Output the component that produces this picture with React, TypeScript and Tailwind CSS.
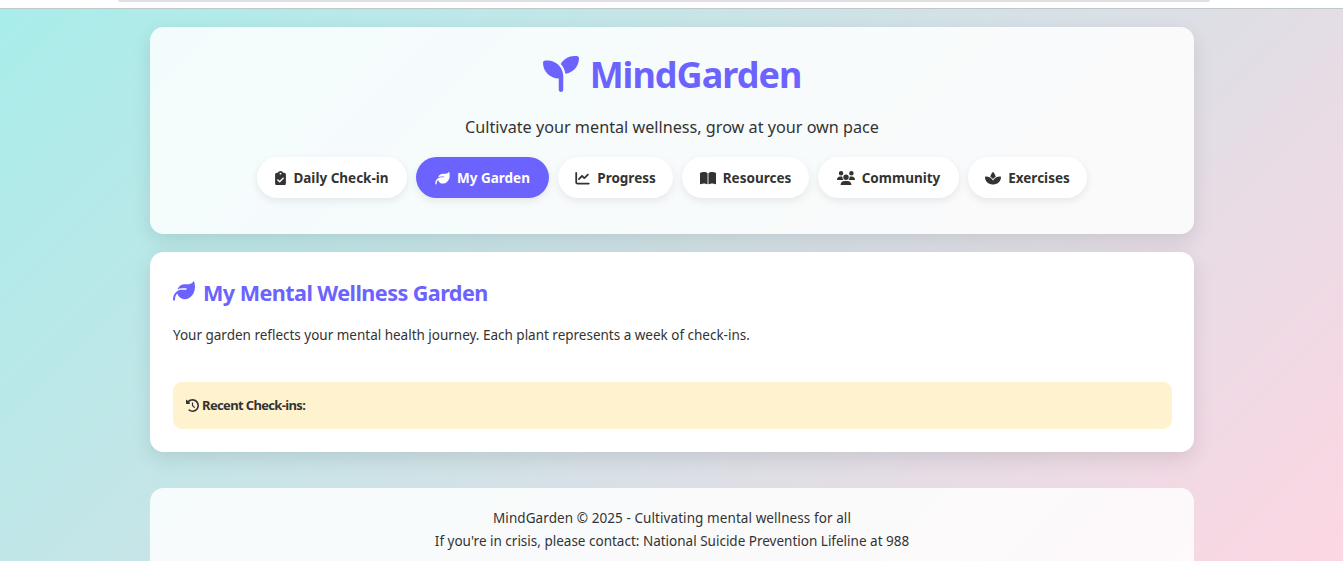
import React, { useState } from "react";
import type { IconType } from "react-icons";
import {
  FaBookOpen,
  FaChartLine,
  FaClipboardCheck,
  FaClockRotateLeft,
  FaLeaf,
  FaSeedling,
  FaSpa,
  FaUsers,
} from "react-icons/fa6";

type tab = {
  id: string;
  label: string;
  icon: IconType;
  size: string;
  iconSize: string;
};

const tabs: tab[] = [
  {
    id: "checkin",
    label: "Daily Check-in",
    icon: FaClipboardCheck,
    size: "w-[150px]",
    iconSize: "w-[11px]",
  },
  {
    id: "garden",
    label: "My Garden",
    icon: FaLeaf,
    size: "w-[133px]",
    iconSize: "w-[15px]",
  },
  {
    id: "progress",
    label: "Progress",
    icon: FaChartLine,
    size: "w-[115px]",
    iconSize: "w-[15px]",
  },
  {
    id: "resources",
    label: "Resources",
    icon: FaBookOpen,
    size: "w-[127px]",
    iconSize: "w-[16px]",
  },
  {
    id: "community",
    label: "Community",
    icon: FaUsers,
    size: "w-[141px]",
    iconSize: "w-[18px]",
  },
  {
    id: "exercises",
    label: "Exercises",
    icon: FaSpa,
    size: "w-[119px]",
    iconSize: "w-[16px]",
  },
];

const Header = ({
  active,
  onChange,
}: {
  active: string;
  onChange: (id: string) => void;
}) => {
  return (
    <header className="h-[207px] rounded-[13.5px] bg-white/85 pt-[19px] text-center shadow-[0_7px_20px_rgba(0,0,0,0.1)]">
      <h1 className="flex h-[58px] items-center justify-center gap-[11px] text-[36px] font-bold tracking-[-0.98px] text-[#6c63ff]">
        <FaSeedling className="size-9 -translate-y-px" />
        <span>MindGarden</span>
      </h1>
      <p className="mt-[9px] h-[29px] text-[16.2px] leading-[29px]">
        Cultivate your mental wellness, grow at your own pace
      </p>
      <nav className="mt-[15px] flex justify-center gap-[9px]">
        {tabs.map((e) => {
          const Icon = e.icon;

          return (
            <button
              key={e.id}
              className={`${e.size} flex h-[41px] items-center justify-center gap-[7px] rounded-full pt-px text-[13.5px] font-bold whitespace-nowrap shadow-[0_3px_9px_rgba(0,0,0,0.08)] ${
                active == e.id ? "bg-[#6c63ff] text-white" : "bg-white"
              }`}
              onClick={() => onChange(e.id)}
            >
              <Icon className={`${e.iconSize} h-[14.4px] shrink-0`} />
              <span>{e.label}</span>
            </button>
          );
        })}
      </nav>
    </header>
  );
};

const Garden = () => {
  return (
    <section className="mt-[18px] h-[200px] rounded-[13.5px] bg-white pr-[22px] pl-[23px] pt-6 shadow-[0_7px_20px_rgba(0,0,0,0.1)]">
      <h2 className="flex h-[35px] items-center gap-2 text-[21.6px] font-bold tracking-[-0.56px] text-[#6c63ff]">
        <FaLeaf className="size-[22px] -translate-y-[3px]" />
        <span>My Mental Wellness Garden</span>
      </h2>
      <p className="mt-[13px] leading-[23px] tracking-[-0.01px]">
        Your garden reflects your mental health journey. Each plant represents a
        week of check-ins.
      </p>
      <div className="mt-[35px] flex h-[47px] items-center gap-[3px] rounded-[9px] bg-[#fff2cf] px-[13px] text-[13px] font-bold tracking-[-0.65px]">
        <FaClockRotateLeft className="size-[13px]" />
        <span>Recent Check-ins:</span>
      </div>
    </section>
  );
};

const App = () => {
  const [active, setActive] = useState("garden");

  return (
    <div className="h-[561px] overflow-hidden bg-white font-['Noto_Sans',sans-serif] text-[13.5px] text-[#333]">
      <div className="h-[9px] border-b border-[#c0c8cb] pl-[118px]">
        <div className="h-[2px] w-[1092px] rounded-b-full bg-[#dfdfe4]"></div>
      </div>
      <div className="h-[590px] bg-[linear-gradient(135deg,#a8edea_0%,#fed6e3_100%)] pt-[18px] pl-[150px]">
        <div className="w-[1044px]">
          <Header active={active} onChange={setActive} />
          <Garden />
          <footer className="mt-9 h-[91px] rounded-[13.5px] bg-white/85 pt-[19px] text-center leading-[23px]">
            <p className="tracking-[0.08px]">
              MindGarden © 2025 - Cultivating mental wellness for all
            </p>
            <p>
              If you're in crisis, please contact: National Suicide Prevention
              Lifeline at 988
            </p>
          </footer>
        </div>
      </div>
    </div>
  );
};

export default App;
